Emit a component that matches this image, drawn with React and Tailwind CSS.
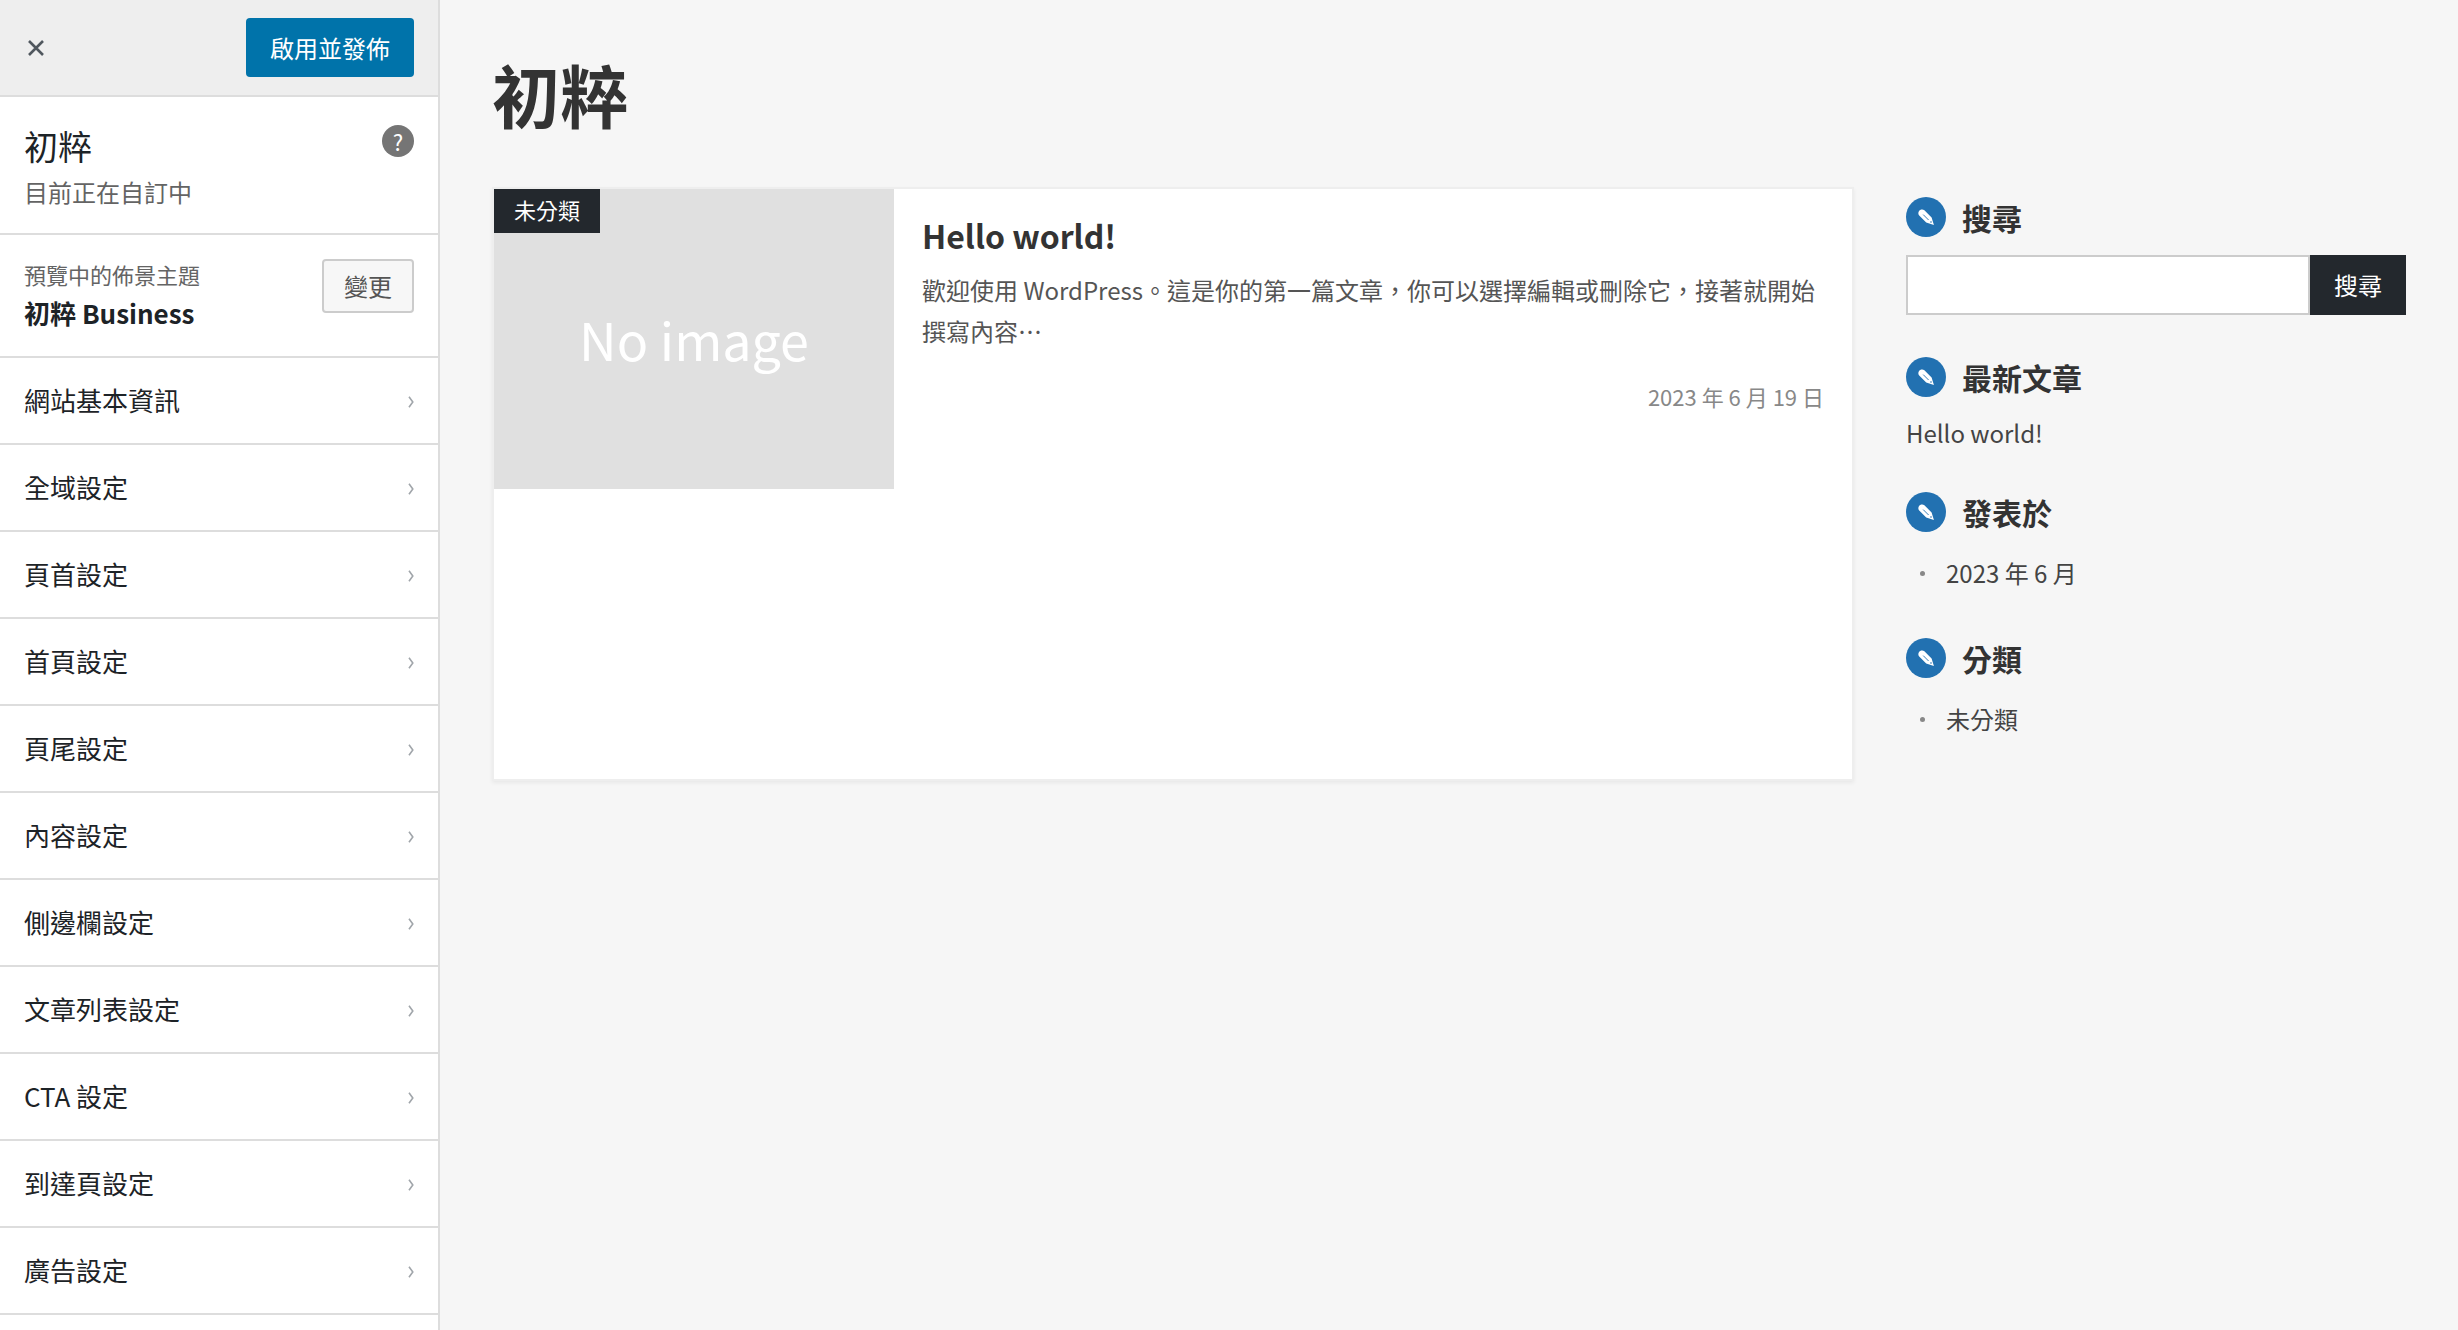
import React from 'react';

const SECTIONS = [
  '網站基本資訊',
  '全域設定',
  '頁首設定',
  '首頁設定',
  '頁尾設定',
  '內容設定',
  '側邊欄設定',
  '文章列表設定',
  'CTA 設定',
  '到達頁設定',
  '廣告設定',
];

const CloseIcon = () => (
  <svg viewBox="0 0 16 16" className="size-4" fill="none" stroke="currentColor" strokeWidth="2.6" aria-hidden="true">
    <path d="M1 1 15 15M15 1 1 15" />
  </svg>
);

const ChevronIcon = () => (
  <svg viewBox="0 0 6 12" className="h-3 w-[6px] mt-1" fill="none" stroke="#a0a5aa" strokeWidth="1.6" aria-hidden="true">
    <path d="M1 .8 4.8 6 1 11.2" />
  </svg>
);

const PencilIcon = () => (
  <svg viewBox="0 0 16 16" className="size-4" aria-hidden="true">
    <path d="M.9 2.2C1.8.6 4.6-.2 6.4 1.3L13.6 8.4 15.9 15.9 8.2 13.6 1.2 6.6C.1 5.2.1 3.6.9 2.2Z" fill="#fff" />
    <path d="M5.2 5.6 10.6 11" stroke="#2271b1" strokeWidth=".9" fill="none" />
    <circle cx="13" cy="13" r=".8" fill="#2271b1" />
  </svg>
);

const Sidebar = () => (
  <aside className="w-[440px] shrink-0 bg-white border-r-2 border-[#ddd] text-[#1d2327]">
    <div className="flex items-center justify-between h-[97px] pl-7 pr-6 bg-[#eee] border-b-2 border-[#ddd]">
      <button className="text-[#50575e]" aria-label="關閉">
        <CloseIcon />
      </button>
      <button className="h-[59px] px-6 rounded bg-[#0073aa] text-white text-2xl">啟用並發佈</button>
    </div>

    <div className="flex items-start justify-between h-[138px] px-6 pt-7 border-b-2 border-[#ddd]">
      <div>
        <h2 className="text-[34px] leading-[42px]">初粹</h2>
        <p className="text-2xl leading-[50px] text-[#646464]">目前正在自訂中</p>
      </div>
      <button className="size-8 rounded-full bg-[#757575] text-white text-[22px] leading-8" aria-label="說明">
        ?
      </button>
    </div>

    <div className="flex items-start justify-between h-[123px] px-6 pt-6 border-b-2 border-[#ddd]">
      <div>
        <p className="text-[22px] leading-[30px] text-[#646464]">預覽中的佈景主題</p>
        <h3 className="text-[26px] leading-[48px] font-bold">初粹 Business</h3>
      </div>
      <button className="h-[54px] px-5 rounded border-2 border-[#ccc] bg-[#f7f7f7] text-2xl text-[#555]">變更</button>
    </div>

    <ul>
      {SECTIONS.map((name) => (
        <li key={name}>
          <button className="flex items-center justify-between w-full h-[87px] px-6 pb-[2px] border-b-2 border-[#ddd] text-[26px]">
            {name}
            <ChevronIcon />
          </button>
        </li>
      ))}
    </ul>
  </aside>
);

const PostCard = () => (
  <article className="flex items-start flex-1 min-h-[594px] bg-white border-2 border-[#eee] shadow-[0_2px_4px_rgba(0,0,0,0.06)]">
    <div className="relative flex items-center justify-center w-[400px] h-[300px] shrink-0 bg-[#e0e0e0]">
      <span className="text-[52px] text-white">No image</span>
      <a href="#" className="absolute top-0 left-0 px-5 pb-1 bg-[#23282d] text-white text-[22px] leading-10">
        未分類
      </a>
    </div>
    <div className="flex-1 px-7 pt-6">
      <h2 className="text-[32px] leading-[44px] font-bold">
        <a href="#">Hello world!</a>
      </h2>
      <p className="mt-3 text-2xl leading-[41px] text-[#555]">
        歡迎使用 WordPress。這是你的第一篇文章，你可以選擇編輯或刪除它，接著就開始撰寫內容⋯
      </p>
      <p className="mt-7 text-right text-[22px] leading-[34px] text-[#888]">2023 年 6 月 19 日</p>
    </div>
  </article>
);

const Widget = ({ title, children }) => (
  <section>
    <div className="flex items-center gap-4 h-10">
      <span className="flex items-center justify-center size-10 rounded-full bg-[#2271b1]">
        <PencilIcon />
      </span>
      <h3 className="text-[30px] leading-10 font-bold">{title}</h3>
    </div>
    {children}
  </section>
);

const BulletItem = ({ children }) => (
  <li className="flex items-center pl-[14px] gap-[21px] text-2xl leading-10 text-[#444]">
    <span className="size-[5px] rounded-full bg-[#888]" />
    <a href="#">{children}</a>
  </li>
);

const App = () => {
  return (
    <div className="flex min-h-screen bg-[#f6f6f6] text-[#333] font-['Noto_Sans_CJK_TC',sans-serif]" lang="zh-TW">
      <Sidebar />
      <div className="flex-1 px-[52px]">
        <header className="pt-11 pb-[43px]">
          <h1 className="text-[68px] leading-[100px] font-bold">初粹</h1>
        </header>

        <div className="flex items-start gap-[52px]">
          <PostCard />

          <div className="w-[500px] shrink-0 pt-[10px]">
            <Widget title="搜尋">
              <form className="flex mt-[18px] mb-[42px]" onSubmit={(e) => e.preventDefault()}>
                <input
                  type="search"
                  aria-label="搜尋"
                  className="flex-1 min-w-0 h-[60px] px-4 bg-white border-2 border-[#ccc] text-2xl outline-none"
                />
                <button className="w-24 bg-[#23282d] text-white text-2xl">搜尋</button>
              </form>
            </Widget>
            <Widget title="最新文章">
              <p className="mt-4 mb-[39px] text-2xl leading-10 text-[#444]">
                <a href="#">Hello world!</a>
              </p>
            </Widget>
            <Widget title="發表於">
              <ul className="mt-[21px] mb-[45px]">
                <BulletItem>2023 年 6 月</BulletItem>
              </ul>
            </Widget>
            <Widget title="分類">
              <ul className="mt-[21px]">
                <BulletItem>未分類</BulletItem>
              </ul>
            </Widget>
          </div>
        </div>
      </div>
    </div>
  );
};

export default App;
